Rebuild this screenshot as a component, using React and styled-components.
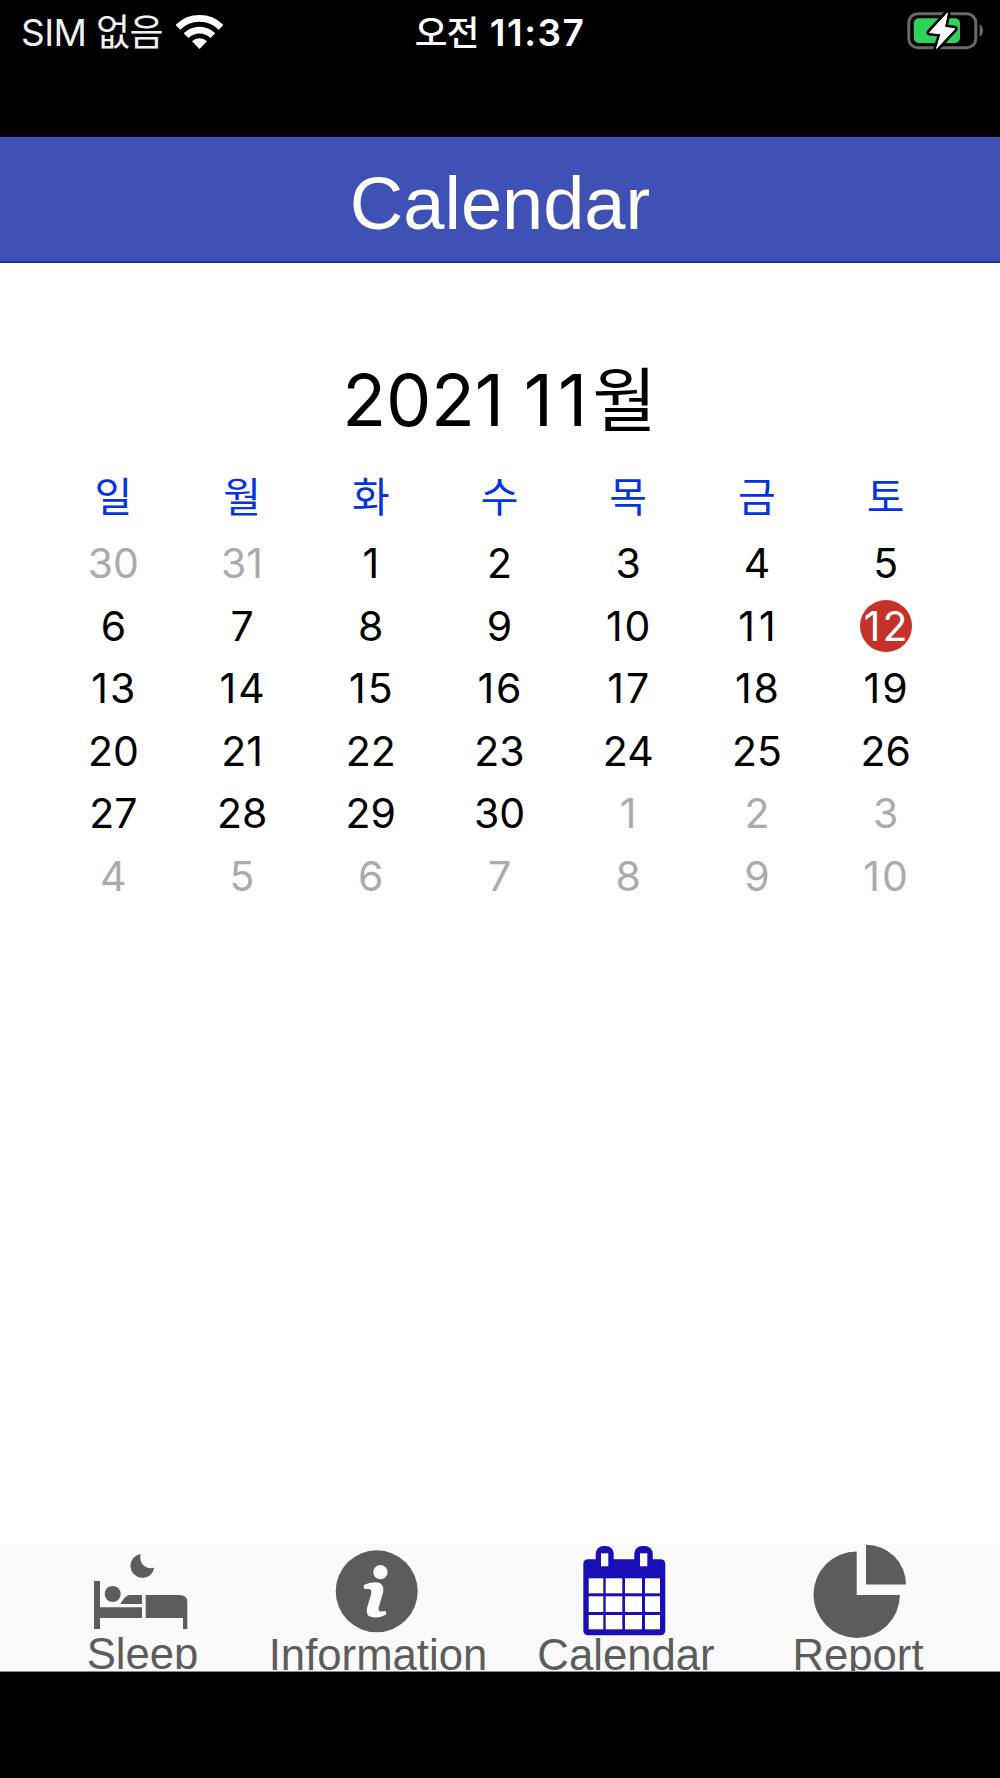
import styled, { createGlobalStyle } from "styled-components";

const GlobalStyle = createGlobalStyle`
  * {
    box-sizing: border-box;
  }

  body {
    margin: 0;
    background: #000;
  }
`;

const Screen = styled.div`
  display: flex;
  flex-direction: column;
  width: 1000px;
  height: 1778px;
  background: #000;
  font-family: Inter, "Noto Sans CJK KR", sans-serif;
`;

const StatusBar = styled.header`
  display: grid;
  grid-template-columns: 1fr auto 1fr;
  align-items: start;
  height: 137px;
  padding: 8px 16px 0;
  color: #fff;
`;

const Carrier = styled.div`
  display: flex;
  gap: 13px;
  padding-left: 5px;
  font-size: 37px;
  line-height: 49px;
  letter-spacing: -0.6px;
  color: #f0f0f0;
`;

const Clock = styled.div`
  font-size: 37px;
  font-weight: 600;
  line-height: 49px;
  letter-spacing: 1.5px;
  white-space: nowrap;
`;

const BatterySlot = styled.div`
  display: flex;
  justify-content: flex-end;
`;

const TitleBar = styled.div`
  height: 126px;
  border-bottom: 2px solid #1634a8;
  background: #3f51b5;
  color: #fff;
  font-family: "Liberation Sans", Arial, sans-serif;
  font-size: 74px;
  line-height: 133px;
  text-align: center;
`;

const Content = styled.main`
  flex: 1;
  padding: 90px 50px 0 49px;
  background: #fff;
`;

const Month = styled.h1`
  margin: 0;
  font-size: 72px;
  font-weight: 400;
  line-height: 93px;
  letter-spacing: -0.3px;
  text-align: center;
  color: #000;
`;

const MonthNumber = styled.span`
  letter-spacing: 5px;
`;

const Hangul = styled.span`
  font-size: ${(props) => props.$size}px;
  font-weight: ${(props) => props.$weight || 400};
  letter-spacing: ${(props) => props.$spacing || 0}px;
`;

const Grid = styled.div`
  display: grid;
  grid-template-columns: repeat(7, 1fr);
  grid-template-rows: 85px repeat(6, 62.5px);
  justify-items: center;
  align-items: center;
`;

const Weekday = styled.div`
  padding-top: 14px;
  font-size: 41px;
  line-height: 60px;
  color: #0433e0;
`;

const Day = styled.div`
  display: flex;
  justify-content: center;
  align-items: center;
  width: 52px;
  height: 52px;
  border-radius: 50%;
  background: ${(props) => (props.$today ? "#c53229" : "transparent")};
  color: ${(props) =>
    props.$today ? "#fff" : props.$muted ? "#ababab" : "#000"};
  font-size: 41px;
  letter-spacing: ${(props) => props.$spacing}px;
  text-indent: ${(props) => props.$spacing}px;
`;

const TabBar = styled.nav`
  display: grid;
  grid-template-columns: 245px 226px 270px 194px;
  height: 128px;
  padding-left: 20px;
  border-bottom: 1px solid #8a8a8a;
  background: #fafafa;
  overflow: hidden;
`;

const Tab = styled.div`
  display: flex;
  flex-direction: column;
  align-items: center;
  height: ${(props) => props.$height || 127}px;
  overflow: hidden;
  color: #5c5c5c;
`;

const TabLabel = styled.span`
  margin-top: ${(props) => props.$top}px;
  font-family: "Liberation Sans", Arial, sans-serif;
  font-size: 43.7px;
  line-height: 50px;
  white-space: nowrap;
`;

const HomeArea = styled.div`
  height: 106px;
`;

const Icon = styled.svg`
  display: block;
  flex: none;
`;

function WifiIcon() {
  return (
    <Icon width="47" height="42" viewBox="0.5 0 47 42" fill="none">
      <path
        d="M2.4 19.4A30.5 30.5 0 0 1 45.6 19.4M10.6 27.6A19 19 0 0 1 37.4 27.6"
        stroke="#fff"
        strokeWidth="6.8"
      />
      <path d="M16.5 33.2A11 11 0 0 1 31.5 33.2L24 41Z" fill="#fff" />
    </Icon>
  );
}

function BatteryIcon() {
  const bolt = "M41.5 5L23.5 24.6L35 25.8L30.5 40.5L48.8 20.8L38.5 19.2Z";

  return (
    <Icon width="78" height="46" viewBox="0 0 78 46">
      <rect
        x="2.8"
        y="5.7"
        width="67"
        height="34"
        rx="9"
        fill="none"
        stroke="#6a6a6a"
        strokeWidth="3"
      />
      <path d="M73.6 16.3Q77 18 77 22.5T73.6 28.7Z" fill="#6a6a6a" />
      <rect x="7.8" y="10.3" width="46.2" height="24.7" rx="5" fill="#30d158" />
      <path
        d={bolt}
        fill="#000"
        stroke="#000"
        strokeWidth="6"
        strokeLinejoin="round"
      />
      <path
        d={bolt}
        fill="#fff"
        stroke="#fff"
        strokeWidth="1"
        strokeLinejoin="round"
      />
    </Icon>
  );
}

function SleepIcon() {
  return (
    <Icon width="101" height="94" viewBox="0 0 101 94" fill="currentColor">
      <path d="M48.7 10A12 12 0 1 0 62.3 23.6C55.5 26.2 46 20.5 48.7 10Z" />
      <circle cx="20.7" cy="50" r="8" />
      <path d="M2 37H8V63.3H50V74H8V85H2Z" />
      <path d="M28.3 60C31 55.5 34 51 38 51H50V60Z" />
      <path d="M53.7 51H87Q95.3 51 95.3 58V85H91V74H53.7Z" />
    </Icon>
  );
}

function InfoIcon() {
  return (
    <Icon width="100" height="94" viewBox="0 0 100 94">
      <circle cx="48.7" cy="47.3" r="41" fill="currentColor" />
      <circle cx="52.4" cy="28.2" r="7.1" fill="#fafafa" />
      <path
        d="M36 44.8L35.7 41Q41 38.3 47 38.3C53 38.3 56.2 41.5 55.2 48L50.7 63.5Q50 67.3 53 67.6L58 67V70.4Q53.5 73.4 47.5 73.4C40 73.4 38 70.5 39 64L43 50.5Q44.2 45.4 41 45Z"
        fill="#fafafa"
      />
    </Icon>
  );
}

function CalendarIcon() {
  const columns = [
    [12.7, 14.6],
    [29.7, 16.6],
    [49, 17],
    [69, 15],
  ];
  const rows = [
    [34.3, 15],
    [52.3, 15.7],
    [71, 14.3],
  ];

  return (
    <Icon width="100" height="94" viewBox="0 0 100 94" fill="#1a0fb4">
      <rect x="7.3" y="15.3" width="82" height="76" rx="4.5" />
      <rect x="19.7" y="2" width="18" height="26" rx="8" />
      <rect x="58.3" y="2" width="18.5" height="26" rx="8" />
      <rect x="25" y="9.3" width="7.3" height="13" fill="#fafafa" />
      <rect x="64" y="9.3" width="7.3" height="13" fill="#fafafa" />
      {rows.map(([y, height]) =>
        columns.map(([x, width]) => (
          <rect
            key={`${x}-${y}`}
            x={x}
            y={y}
            width={width}
            height={height}
            fill="#fff"
          />
        )),
      )}
    </Icon>
  );
}

function ReportIcon() {
  return (
    <Icon width="100" height="94" viewBox="0 0 100 94" fill="currentColor">
      <path d="M48.7 51V7.5A43.2 43.2 0 1 0 91.9 51Z" />
      <path d="M58 40.5V0.7A40 39.8 0 0 1 98 40.5Z" />
    </Icon>
  );
}

const weekdays = ["일", "월", "화", "수", "목", "금", "토"];

const days = [
  ...[30, 31].map((day) => ({ day, muted: true })),
  ...Array.from({ length: 30 }, (_, i) => ({ day: i + 1, muted: false })),
  ...Array.from({ length: 10 }, (_, i) => ({ day: i + 1, muted: true })),
];

const tabs = [
  { label: "Sleep", icon: SleepIcon, top: -9, height: 125 },
  { label: "Information", icon: InfoIcon, top: -8 },
  { label: "Calendar", icon: CalendarIcon, top: -8 },
  { label: "Report", icon: ReportIcon, top: -8 },
];

// a leading 1 is narrow, so the teens need looser tracking
function daySpacing(day) {
  if (day === 11) return 4;
  if (day >= 10 && day < 20) return 2;
  return 0;
}

function App() {
  return (
    <>
      <GlobalStyle />
      <Screen>
        <StatusBar>
          <Carrier>
            <span>SIM 없음</span>
            <WifiIcon />
          </Carrier>
          <Clock>
            <Hangul $size={35.5} $weight={500} $spacing={-0.5}>
              오전
            </Hangul>{" "}
            11:37
          </Clock>
          <BatterySlot>
            <BatteryIcon />
          </BatterySlot>
        </StatusBar>

        <TitleBar>Calendar</TitleBar>

        <Content>
          <Month>
            2021 <MonthNumber>11</MonthNumber>
            <Hangul $size={70}>월</Hangul>
          </Month>

          <Grid>
            {weekdays.map((name) => (
              <Weekday key={name}>{name}</Weekday>
            ))}
            {days.map(({ day, muted }, i) => (
              <Day
                key={i}
                $muted={muted}
                $today={day === 12 && !muted}
                $spacing={daySpacing(day)}
              >
                {day}
              </Day>
            ))}
          </Grid>
        </Content>

        <TabBar>
          {tabs.map(({ label, icon: TabIcon, top, height }) => (
            <Tab key={label} $height={height}>
              <TabIcon />
              <TabLabel $top={top}>{label}</TabLabel>
            </Tab>
          ))}
        </TabBar>
        <HomeArea />
      </Screen>
    </>
  );
}

export default App;
